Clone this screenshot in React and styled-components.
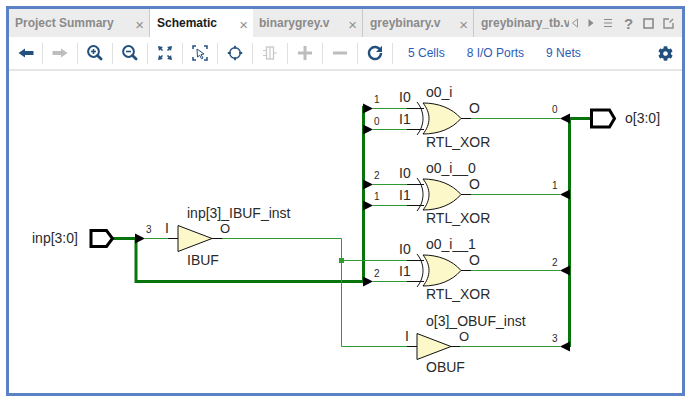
import React from "react";
import styled, { createGlobalStyle } from "styled-components";
import { FaCog } from "react-icons/fa";

const Global = createGlobalStyle`
  html, body { margin: 0; padding: 0; background: #fff; }
  body { font-family: "Liberation Sans", Arial, sans-serif; }
`;

const Page = styled.div`
  width: 690px;
  height: 401px;
  padding: 6px 5px 5px 6px;
  box-sizing: border-box;
  background: #fff;
`;

const Frame = styled.div`
  height: 390px;
  box-sizing: border-box;
  border: 3px solid #5a82c4;
  display: flex;
  flex-direction: column;
  background: #fff;
`;

const TabBar = styled.div`
  height: 28px;
  flex: none;
  display: flex;
  background: #ececec;
`;

const Tab = styled.div`
  width: ${(p) => p.$width}px;
  flex: none;
  box-sizing: border-box;
  padding-left: ${(p) => p.$pad}px;
  padding-right: 5px;
  display: flex;
  align-items: center;
  justify-content: space-between;
  overflow: hidden;
  white-space: nowrap;
  background: ${(p) => (p.$active ? "#fff" : "transparent")};
  border-right: ${(p) => (p.$sep ? "1px solid #c9c9c9" : "none")};
  font-size: 12px;
  font-weight: 700;
  color: ${(p) => (p.$active ? "#1a1a1a" : "#8a8a8a")};
`;

const Close = styled.span`
  font-size: 15px;
  font-weight: 400;
  color: #8f8f8f;
  line-height: 1;
  margin-top: 2px;
`;

const TabControls = styled.div`
  display: flex;
  align-items: center;
`;

const ControlSlot = styled.span`
  width: ${(p) => p.$w}px;
  display: flex;
  justify-content: center;
  align-items: center;
  color: #8a8a8a;
`;

const Question = styled.span`
  font-size: 15px;
  font-weight: 700;
  color: #8a8a8a;
`;

const Toolbar = styled.div`
  height: 32px;
  flex: none;
  display: flex;
  align-items: center;
  border-bottom: 2px solid #e6e6e6;
  background: #fff;
`;

const ToolButton = styled.div`
  width: 35px;
  height: 21px;
  flex: none;
  box-sizing: border-box;
  display: flex;
  align-items: center;
  justify-content: center;
  border-right: 1px solid #e0e0e0;
  &:first-child { width: 34px; }
`;

const Links = styled.div`
  display: flex;
  align-items: center;
  flex: 1;
  padding-left: 15px;
  gap: 22px;
`;

const StatLink = styled.span`
  font-size: 12px;
  color: #2b5bb5;
  white-space: nowrap;
`;

const GearSlot = styled.div`
  width: 24px;
  display: flex;
  color: #23507f;
`;

const Canvas = styled.svg`
  display: block;
  flex: 1;
  width: 673px;
  height: 322px;
`;

const Label = styled.text`
  font-family: "Liberation Sans", Arial, sans-serif;
  font-size: ${(p) => p.$size || 14}px;
  fill: ${(p) => p.$color || "#2a2a2a"};
`;

const THIN = "#2f9a2f";
const BUS = "#08740c";
const NAVY = "#23507f";
const GRAY = "#bdbdbd";

const Icon = ({ children }) => (
  <svg width="18" height="18" viewBox="0 0 18 18">{children}</svg>
);

const Magnifier = ({ plus }) => (
  <Icon>
    <circle cx="7.5" cy="7.5" r="5.4" fill="none" stroke={NAVY} strokeWidth="2" />
    <path d="M5 7.5h5" stroke={NAVY} strokeWidth="1.6" />
    {plus && <path d="M7.5 5v5" stroke={NAVY} strokeWidth="1.6" />}
    <path d="M11.5 11.5l3.6 3.6" stroke={NAVY} strokeWidth="2.8" strokeLinecap="round" />
  </Icon>
);

const toolIcons = [
  <Icon><path d="M1.5 9L8 4.5V7h8.5v4H8v2.500z" fill={NAVY} /></Icon>,
  <Icon><path d="M16.500 9L10 4.500V7H1.500v4H10v2.500z" fill={GRAY} /></Icon>,
  <Magnifier plus />,
  <Magnifier />,
  <Icon>
    <path d="M2 2l5 1-1.500 1.200L7 6 6 7 4.300 5.500 3 7zM16 2l-1 5-1.200-1.500L12 7l-1-1 1.500-1.700L11 3zM2 16l1-5 1.300 1.500L6 11l1 1-1.500 1.700L7 15zM16 16l-5-1 1.500-1.300L11 12l1-1 1.800 1.500L15 11z" fill={NAVY} />
  </Icon>,
  <Icon>
    <path d="M2 5V2h3M13 2h3v3M16 13v3h-3M5 16H2v-3" fill="none" stroke={NAVY} strokeWidth="1.500" />
    <path d="M6 5l7 5-3 .5 2 3.500-1.500.8-1.800-3.500L6.500 13z" fill="#fff" stroke={NAVY} strokeWidth="1" />
  </Icon>,
  <Icon>
    <circle cx="9" cy="9" r="5.300" fill="none" stroke={NAVY} strokeWidth="1.400" />
    <path d="M9 1.800v3M9 13.200v3M1.800 9h3M13.200 9h3" stroke={NAVY} strokeWidth="1.800" />
  </Icon>,
  <Icon>
    <rect x="5.500" y="3" width="7" height="12" fill="none" stroke="#c8c8c8" strokeWidth="1.300" />
    <path d="M2 6.500h3.500M2 11.500h3.500M12.500 9H16M9 3v12" stroke="#c8c8c8" strokeWidth="1.200" />
  </Icon>,
  <Icon><path d="M2 9h14M9 2v14" stroke={GRAY} strokeWidth="3" /></Icon>,
  <Icon><path d="M2 9h14" stroke={GRAY} strokeWidth="3" /></Icon>,
  <Icon>
    <path d="M14.300 6.200A6 6 0 1 0 15 9" fill="none" stroke={NAVY} strokeWidth="2.400" />
    <path d="M16 1.800V8h-6z" fill={NAVY} />
  </Icon>,
];

const Wire = ({ d }) => <path d={d} fill="none" stroke={THIN} strokeWidth="1" />;
const Stub = ({ d }) => <path d={d} fill="none" stroke="#111" strokeWidth="1" />;
const Bus = ({ d }) => <path d={d} fill="none" stroke={BUS} strokeWidth="3" />;
const ArrowR = ({ x, y }) => <path d={`M${x} ${y - 5}L${x + 10} ${y}L${x} ${y + 5}z`} fill="#000" />;
const ArrowL = ({ x, y }) => <path d={`M${x} ${y - 5}L${x - 10} ${y}L${x} ${y + 5}z`} fill="#000" />;

const GATE_FILL = "#fdf8c9";

const XorGate = ({ dy, name }) => (
  <g transform={`translate(0 ${dy})`}>
    <Stub d="M407 108.500H424M407 129.500H424M461 118.500H471" />
    <path d="M423 103C438 103 452 108 461 118.500C452 129 438 134 423 134C431 124 431 113 423 103z" fill={GATE_FILL} stroke="#111" strokeWidth="1" />
    <path d="M417 102C425 112 425 125 417 135" fill="none" stroke="#111" strokeWidth="1" />
    <Label x="399" y="102">I0</Label>
    <Label x="399" y="124">I1</Label>
    <Label x="469" y="113">O</Label>
    <Label x="426" y="97">{name}</Label>
    <Label x="426" y="147">RTL_XOR</Label>
  </g>
);

const Buffer = ({ x, y }) => (
  <path d={`M${x} ${y - 13}L${x + 34} ${y}L${x} ${y + 13}z`} fill={GATE_FILL} stroke="#111" strokeWidth="1" />
);

export default function App() {
  return (
    <Page>
      <Global />
      <Frame>
        <TabBar>
          <Tab $width={141} $pad={6} $sep>Project Summary<Close>×</Close></Tab>
          <Tab $width={103} $pad={7} $active>Schematic<Close>×</Close></Tab>
          <Tab $width={110} $pad={6} $sep>binarygrey.v<Close>×</Close></Tab>
          <Tab $width={111} $pad={7} $sep>greybinary.v<Close>×</Close></Tab>
          <Tab $width={95} $pad={7}>greybinary_tb.v</Tab>
          <TabControls>
            <ControlSlot $w={12}>
              <svg width="8" height="10" viewBox="0 0 8 10"><path d="M6.500 1L1.500 5l5 4z" fill="none" stroke="#9a9a9a" /></svg>
            </ControlSlot>
            <ControlSlot $w={20}>
              <svg width="8" height="10" viewBox="0 0 8 10"><path d="M1.500 1l5 4-5 4z" fill="#8a8a8a" /></svg>
            </ControlSlot>
            <ControlSlot $w={14}>
              <svg width="10" height="10" viewBox="0 0 10 10"><path d="M1 1.500h8M1 5h8M1 8.500h8" stroke="#8a8a8a" strokeWidth="1.200" /></svg>
            </ControlSlot>
            <ControlSlot $w={27}><Question>?</Question></ControlSlot>
            <ControlSlot $w={13}>
              <svg width="11" height="11" viewBox="0 0 11 11"><rect x="1" y="1" width="9" height="9" fill="none" stroke="#8a8a8a" strokeWidth="1.600" /></svg>
            </ControlSlot>
            <ControlSlot $w={27}>
              <svg width="11" height="11" viewBox="0 0 11 11"><path d="M6 1H1v9h9V5M6.500 4.500L10 1" fill="none" stroke="#8a8a8a" strokeWidth="1.400" /></svg>
            </ControlSlot>
          </TabControls>
        </TabBar>
        <Toolbar>
          {toolIcons.map((icon, i) => (
            <ToolButton key={i}>{icon}</ToolButton>
          ))}
          <Links>
            <StatLink>5 Cells</StatLink>
            <StatLink>8 I/O Ports</StatLink>
            <StatLink>9 Nets</StatLink>
          </Links>
          <GearSlot><FaCog size={15} /></GearSlot>
        </Toolbar>
        <Canvas viewBox="9 71 673 322">
          <Bus d="M363.500 106V282.500M136 238.500V281.500H363M111 238.500H136M569.500 117V347M569.500 118.500H591" />
          <Wire d="M373 108.500H407M373 129.500H407M373 184.500H407M373 205.500H407M373 281.500H407M341.500 260.500H407" />
          <Wire d="M471 118.500H560M471 194.500H560M471 270.500H560M460 346.500H560" />
          <Wire d="M145 238.500H168M222 238.500H341.500V346.500H407" />
          <Stub d="M168 238.500H178M212 238.500H222M407 346.500H417M450 346.500H460" />
          <rect x="339" y="258" width="5" height="5" fill={THIN} />
          {[108.5, 129.5, 184.5, 205.5, 281.5].map((y) => <ArrowR key={y} x={363} y={y} />)}
          <ArrowR x={135} y={238.5} />
          {[118.5, 194.5, 270.5, 346.5].map((y) => <ArrowL key={y} x={570} y={y} />)}

          <path d="M91 230.500H106.500L112.500 238.500L106.500 246.500H91z" fill="#fff" stroke="#000" strokeWidth="3" />
          <path d="M591.500 110H609.500L614.500 118.500L609.500 127H591.500z" fill="#fff" stroke="#000" strokeWidth="3" />

          <XorGate dy={0} name="o0_i" />
          <XorGate dy={76} name="o0_i__0" />
          <XorGate dy={152} name="o0_i__1" />
          <Buffer x={178} y={238.5} />
          <Buffer x={417} y={346.5} />

          <Label x="32" y="243">inp[3:0]</Label>
          <Label x="625" y="123">o[3:0]</Label>
          <Label x="187" y="218">inp[3]_IBUF_inst</Label>
          <Label x="165" y="233">I</Label>
          <Label $size={13} x="220" y="233">O</Label>
          <Label x="187" y="265">IBUF</Label>
          <Label x="426" y="326">o[3]_OBUF_inst</Label>
          <Label x="405" y="341">I</Label>
          <Label $size={13} x="459" y="341">O</Label>
          <Label x="426" y="372">OBUF</Label>

          <Label $size={10} x="146" y="233">3</Label>
          <Label $size={10} x="374" y="103">1</Label>
          <Label $size={10} x="374" y="125">0</Label>
          <Label $size={10} x="374" y="179">2</Label>
          <Label $size={10} x="374" y="200">1</Label>
          <Label $size={10} x="374" y="277">2</Label>
          <Label $size={10} x="552" y="113">0</Label>
          <Label $size={10} x="552" y="189">1</Label>
          <Label $size={10} x="552" y="266">2</Label>
          <Label $size={10} x="552" y="342">3</Label>
        </Canvas>
      </Frame>
    </Page>
  );
}
